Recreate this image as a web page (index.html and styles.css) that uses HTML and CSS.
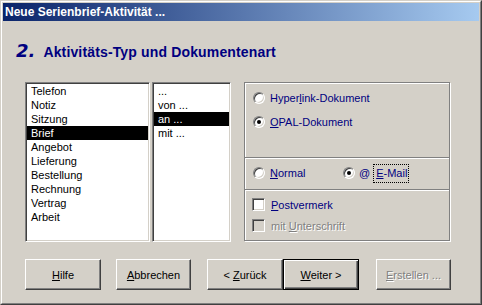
FILE: index.html
```html
<!DOCTYPE html>
<html lang="de">
<head>
<meta charset="utf-8">
<title>Neue Serienbrief-Aktivität</title>
<link rel="stylesheet" href="styles.css">
</head>
<body>
<div class="window">
  <div class="frame">
    <div class="titlebar">Neue Serienbrief-Aktivität ...</div>
    <div class="client">
      <div class="heading">
        <span class="step">2.</span>
        <span class="htext">Aktivitäts-Typ und Dokumentenart</span>
      </div>
      <div class="main">
        <div class="list types">
          <div class="item">Telefon</div>
          <div class="item">Notiz</div>
          <div class="item">Sitzung</div>
          <div class="item sel">Brief</div>
          <div class="item">Angebot</div>
          <div class="item">Lieferung</div>
          <div class="item">Bestellung</div>
          <div class="item">Rechnung</div>
          <div class="item">Vertrag</div>
          <div class="item">Arbeit</div>
        </div>
        <div class="list rel">
          <div class="item">...</div>
          <div class="item">von ...</div>
          <div class="item sel">an ...</div>
          <div class="item">mit ...</div>
        </div>
        <div class="panel">
          <div class="sec sec1">
            <div class="opt"><span class="radio"></span><span>Hyper<u>l</u>ink-Dokument</span></div>
            <div class="opt"><span class="radio on"></span><span><u>O</u>PAL-Dokument</span></div>
          </div>
          <div class="sep"></div>
          <div class="sec sec2">
            <div class="opt normal"><span class="radio"></span><span><u>N</u>ormal</span></div>
            <div class="opt"><span class="radio on gap4"></span><span class="at">@</span><span class="focus"><u>E</u>-Mail</span></div>
          </div>
          <div class="sep"></div>
          <div class="sec sec3">
            <div class="opt chk"><span class="check"></span><span><u>P</u>ostvermerk</span></div>
            <div class="opt chk"><span class="check dis"></span><span class="dis-text">mit <u>U</u>nterschrift</span></div>
          </div>
        </div>
      </div>
      <div class="buttons">
        <div class="btn b-hilfe"><span><u>H</u>ilfe</span></div>
        <div class="btn b-abbr"><span><u>A</u>bbrechen</span></div>
        <div class="btn b-back"><span>&lt; <u>Z</u>urück</span></div>
        <div class="btn default b-next"><span><u>W</u>eiter &gt;</span></div>
        <div class="btn b-create"><span class="dis-text"><u>E</u>rstellen ...</span></div>
      </div>
    </div>
  </div>
</div>
</body>
</html>
```
FILE: styles.css
```css
* { box-sizing: border-box; }
html, body { margin: 0; padding: 0; }
body {
  width: 482px;
  height: 305px;
  overflow: hidden;
  background: #D4D0C8;
  font-family: "Liberation Sans", Arial, sans-serif;
  font-size: 11px;
}
.window {
  width: 482px;
  height: 305px;
  border: 1px solid;
  border-color: #D4D0C8 #404040 #404040 #D4D0C8;
  background: #D4D0C8;
}
.frame {
  height: 100%;
  border: 1px solid;
  border-color: #fff #808080 #808080 #fff;
  padding: 1px;
  display: flex;
  flex-direction: column;
}
.titlebar {
  height: 18px;
  line-height: 18px;
  padding-left: 2px;
  color: #fff;
  font-weight: bold;
  font-size: 12px;
  white-space: nowrap;
  background: linear-gradient(to right, #0A246A, #A6CAF0);
}
.client { flex: 1; }

.heading {
  display: flex;
  align-items: baseline;
  height: 22px;
  margin-top: 21px;
  padding-left: 13px;
  color: #000080;
}
.step {
  font-family: "DejaVu Sans", sans-serif;
  font-weight: bold;
  font-style: italic;
  font-size: 18px;
  line-height: 18px;
}
.htext {
  font-weight: bold;
  font-size: 14px;
  line-height: 16px;
  letter-spacing: 0.15px;
  margin-left: 8px;
}

.main {
  display: flex;
  align-items: flex-start;
  height: 160px;
  margin-top: 18px;
  margin-left: 22px;
}
.list {
  height: 160px;
  background: #fff;
  border: 1px solid;
  border-color: #808080 #fff #fff #808080;
  box-shadow: inset 1px 1px 0 #404040, inset -1px -1px 0 #D4D0C8;
  padding: 1px;
}
.types { width: 125px; }
.rel { width: 79px; margin-left: 2px; }
.item {
  height: 14px;
  line-height: 14px;
  padding-left: 4px;
  white-space: nowrap;
  color: #000;
}
.item.sel { background: #000; color: #fff; }

.panel {
  width: 206px;
  height: 159px;
  margin-left: 13px;
  border: 1px solid #808080;
  box-shadow: inset 1px 1px 0 #fff, 1px 1px 0 #fff;
  display: flex;
  flex-direction: column;
}
.sep {
  height: 2px;
  border-top: 1px solid #808080;
  border-bottom: 1px solid #fff;
}
.sec1 {
  height: 74px;
  padding: 9px 0 0 8px;
  display: flex;
  flex-direction: column;
  gap: 12px;
}
.sec2 {
  height: 30px;
  padding: 8px 0 0 8px;
  display: flex;
}
.sec3 {
  flex: 1;
  padding: 7px 0 0 7px;
  display: flex;
  flex-direction: column;
  gap: 8px;
}
.opt {
  display: flex;
  align-items: center;
  height: 12px;
  line-height: 12px;
  color: #000080;
  white-space: nowrap;
}
.opt.chk { height: 13px; }
.opt.normal { width: 90px; }
.radio {
  flex: none;
  position: relative;
  width: 12px;
  height: 12px;
  margin-right: 5px;
  border-radius: 50%;
  background: #fff;
  border: 1px solid;
  border-color: #808080 #fff #fff #808080;
  box-shadow: inset 1px 1px 0 #404040, inset -1px -1px 0 #D4D0C8;
}
.radio.on::after {
  content: "";
  position: absolute;
  left: 3px;
  top: 3px;
  width: 4px;
  height: 4px;
  border-radius: 50%;
  background: #000;
}
.radio.gap4 { margin-right: 4px; }
.at { margin-right: 3px; }
.focus {
  display: inline-block;
  border: 1px dotted #000;
  padding: 2px 1px 3px 2px;
  line-height: 12px;
}
.check {
  flex: none;
  width: 13px;
  height: 13px;
  margin-right: 6px;
  background: #fff;
  border: 1px solid;
  border-color: #808080 #fff #fff #808080;
  box-shadow: inset 1px 1px 0 #404040, inset -1px -1px 0 #D4D0C8;
}
.check.dis { background: #D4D0C8; }
.dis-text {
  color: #808080;
  text-shadow: 1px 1px 0 #fff;
}

.buttons {
  display: flex;
  margin-top: 17px;
  margin-left: 22px;
}
.btn {
  height: 31px;
  width: 76px;
  display: flex;
  align-items: center;
  justify-content: center;
  color: #000;
  white-space: nowrap;
  border: 1px solid;
  border-color: #fff #404040 #404040 #fff;
  box-shadow: inset -1px -1px 0 #808080;
}
.btn.default {
  border-color: #000;
  box-shadow: inset 1px 1px 0 #fff, inset -1px -1px 0 #404040, inset -2px -2px 0 #808080;
}
.b-abbr { width: 75px; margin-left: 15px; }
.b-back { margin-left: 16px; }
.b-create { width: 75px; margin-left: 17px; }
```
